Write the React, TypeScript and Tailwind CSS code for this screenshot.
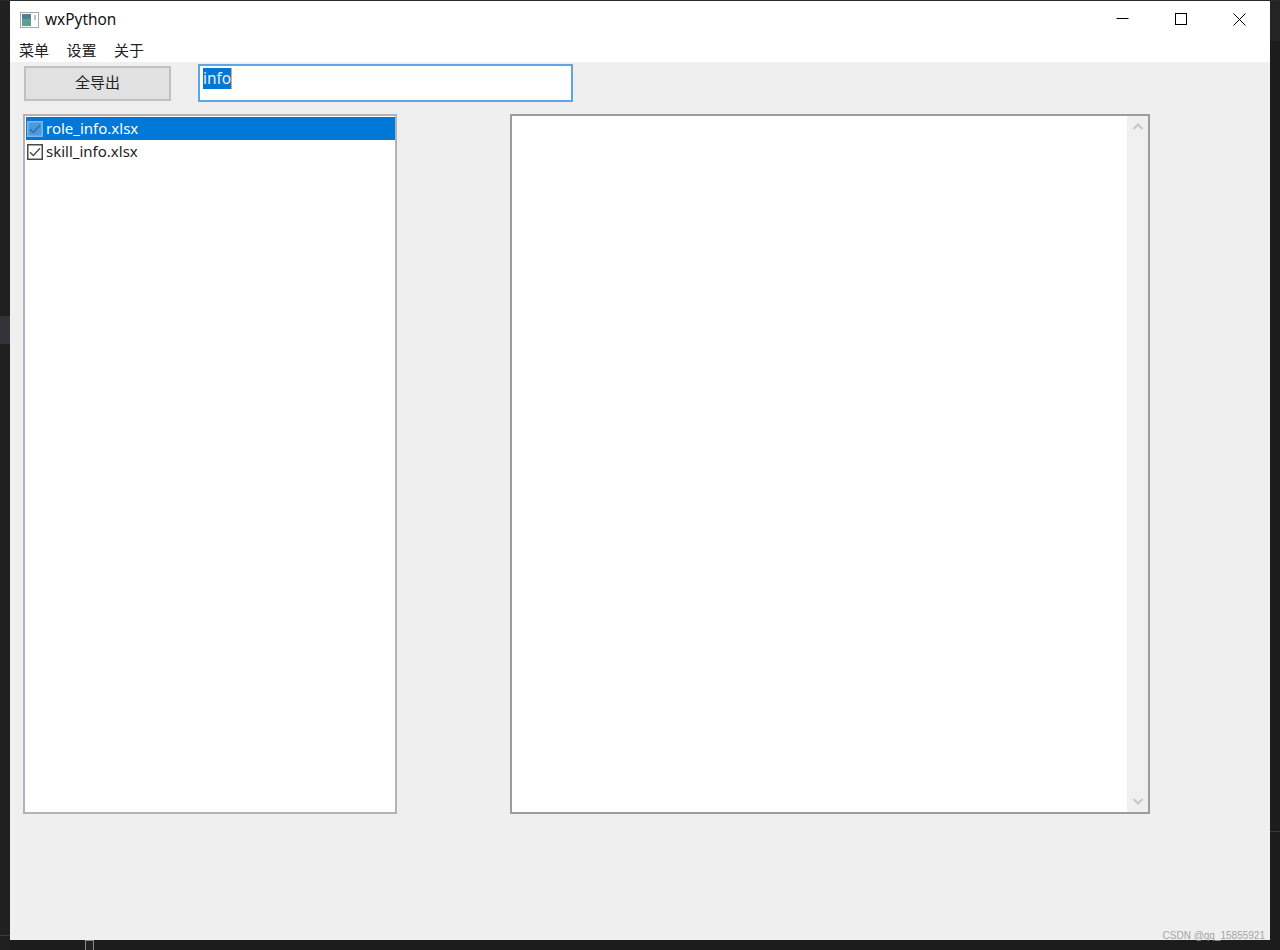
const cn = '"Liberation Sans", "Noto Sans CJK SC", sans-serif';

function Check({ selected }: { selected?: boolean }) {
  return (
    <svg width="16" height="16" viewBox="0 0 16 16" className="shrink-0">
      <rect x="0.75" y="0.75" width="14.5" height="14.5" fill={selected ? "#4a9ae0" : "#ffffff"} stroke={selected ? "#7fb6e8" : "#4a4a4a"} strokeWidth="1.5" />
      <path d="M3 8.2 L6.3 11.5 L13 4.2" fill="none" stroke={selected ? "#2f6ea8" : "#4a4a4a"} strokeWidth="1.4" />
    </svg>
  );
}

function Row({ label, selected }: { label: string; selected?: boolean }) {
  return (
    <div className={`h-[23px] flex items-center pl-px gap-[3px] text-[15px] ${selected ? "bg-[#0078d7] text-white" : "text-[#222222]"}`}>
      <Check selected={selected} />
      <span style={{ fontFamily: '"Noto Sans", "Noto Sans CJK SC", sans-serif' }}>{label}</span>
    </div>
  );
}

export default function App() {
  return (
    <div className="relative w-[1280px] h-[950px] overflow-hidden bg-[#1c1c1c] pt-px pl-[10px]" style={{ fontFamily: cn }}>
      {/* desktop behind the window */}
      <div className="absolute left-0 top-0 w-[10px] h-[950px] bg-[#202020]" />
      <div className="absolute left-0 top-[316px] w-[10px] h-[28px] bg-[#33333a]" />
      <div className="absolute left-0 top-[935px] w-[10px] h-px bg-[#3a3a3a]" />
      <div className="absolute left-[1270px] top-0 w-[10px] h-[41px] bg-[#242424]" />
      <div className="absolute left-[1270px] top-[831px] w-[10px] h-px bg-[#3a3a3a]" />
      <div className="absolute left-0 top-0 w-[1280px] h-px bg-[#2a2a2a]" />
      <div className="absolute left-[85px] top-[940px] w-[9px] h-[10px] border-x border-t border-[#8a8a8a] bg-[#222222]" />

      {/* window */}
      <div className="relative w-[1260px] h-[939px] bg-[#efefef] flex flex-col">
        <div className="bg-white h-[61px] shrink-0 flex flex-col">
          <div className="h-[37px] flex items-center pl-[10px] relative">
            <svg width="19" height="16" viewBox="0 0 19 16" className="shrink-0">
              <rect x="0.5" y="0.5" width="18" height="15" fill="#ffffff" stroke="#a8a8a8" />
              <rect x="2" y="2" width="9" height="12" fill="#5f9f92" />
              <rect x="2" y="2" width="9" height="5" fill="#4f7f94" />
              <rect x="14" y="3" width="2" height="5" fill="#b8c8c8" />
            </svg>
            <span className="ml-[6px] text-[15.4px] text-[#111111]" style={{ fontFamily: '"Noto Sans", sans-serif' }}>wxPython</span>
            <div className="absolute right-px top-0 h-[37px] flex">
              <div className="w-[59px] flex items-center justify-center">
                <svg width="14" height="14" viewBox="0 0 14 14" className="-mt-[1px]"><path d="M1.500 6.500H13.500" stroke="#000" fill="none" /></svg>
              </div>
              <div className="w-[59px] flex items-center justify-center">
                <svg width="12" height="12" viewBox="0 0 12 12" className="-mt-[1px]"><rect x="0.500" y="0.500" width="11" height="11" stroke="#000" fill="none" /></svg>
              </div>
              <div className="w-[59px] flex items-center justify-center">
                <svg width="13" height="13" viewBox="0 0 13 13" className="-mt-[1px]"><path d="M0.500 0.500L12.500 12.500M12.500 0.500L0.500 12.500" stroke="#000" fill="none" /></svg>
              </div>
            </div>
          </div>
          <div className="flex pl-[9px] gap-[17.500px] text-[15px] leading-[20px] text-[#222222] mt-[3px]">
            <span>菜单</span>
            <span>设置</span>
            <span>关于</span>
          </div>
        </div>

        <div className="flex items-start pl-[14px] h-[40px] shrink-0 mt-[2px]">
          <button className="mt-[2px] w-[147px] h-[35px] bg-[#e1e1e1] border-2 border-[#c0c0c0] text-[15px] text-[#222222] flex items-center justify-center">全导出</button>
          <div className="ml-[27px] w-[375px] h-[38px] bg-white border-2 border-[#5aa6e6] pl-[3px] pt-[2px]">
            <span className="block w-fit h-[21px] bg-[#0078d7] text-[#e8f2fb] text-[15.4px] leading-[22px] border-r border-[#e8a868]" style={{ fontFamily: '"Noto Sans", sans-serif' }}>info</span>
          </div>
        </div>

        <div className="flex items-start pl-[13px] mt-[10px]">
          <div className="w-[374px] h-[700px] bg-white border-2 border-[#b2b2b8] pl-px pt-px">
            <Row label="role_info.xlsx" selected />
            <Row label="skill_info.xlsx" />
          </div>
          <div className="ml-[113px] w-[640px] h-[700px] bg-white border-2 border-[#9c9c9c] flex justify-end">
            <div className="w-[21px] h-full bg-[#f0f0f0] flex flex-col items-center justify-between py-[6px]">
              <svg width="12" height="9" viewBox="0 0 12 9"><path d="M1.500 7L6 2.500L10.500 7" fill="none" stroke="#c8c8c8" strokeWidth="2.200" /></svg>
              <svg width="12" height="9" viewBox="0 0 12 9"><path d="M1.500 2L6 6.500L10.500 2" fill="none" stroke="#c8c8c8" strokeWidth="2.200" /></svg>
            </div>
          </div>
        </div>

        <span className="absolute right-[5px] bottom-[-3px] text-[10px] leading-[14px] text-[#a5a5a5]" style={{ fontFamily: '"Liberation Sans", sans-serif' }}>CSDN @qq_15855921</span>
      </div>
    </div>
  );
}
